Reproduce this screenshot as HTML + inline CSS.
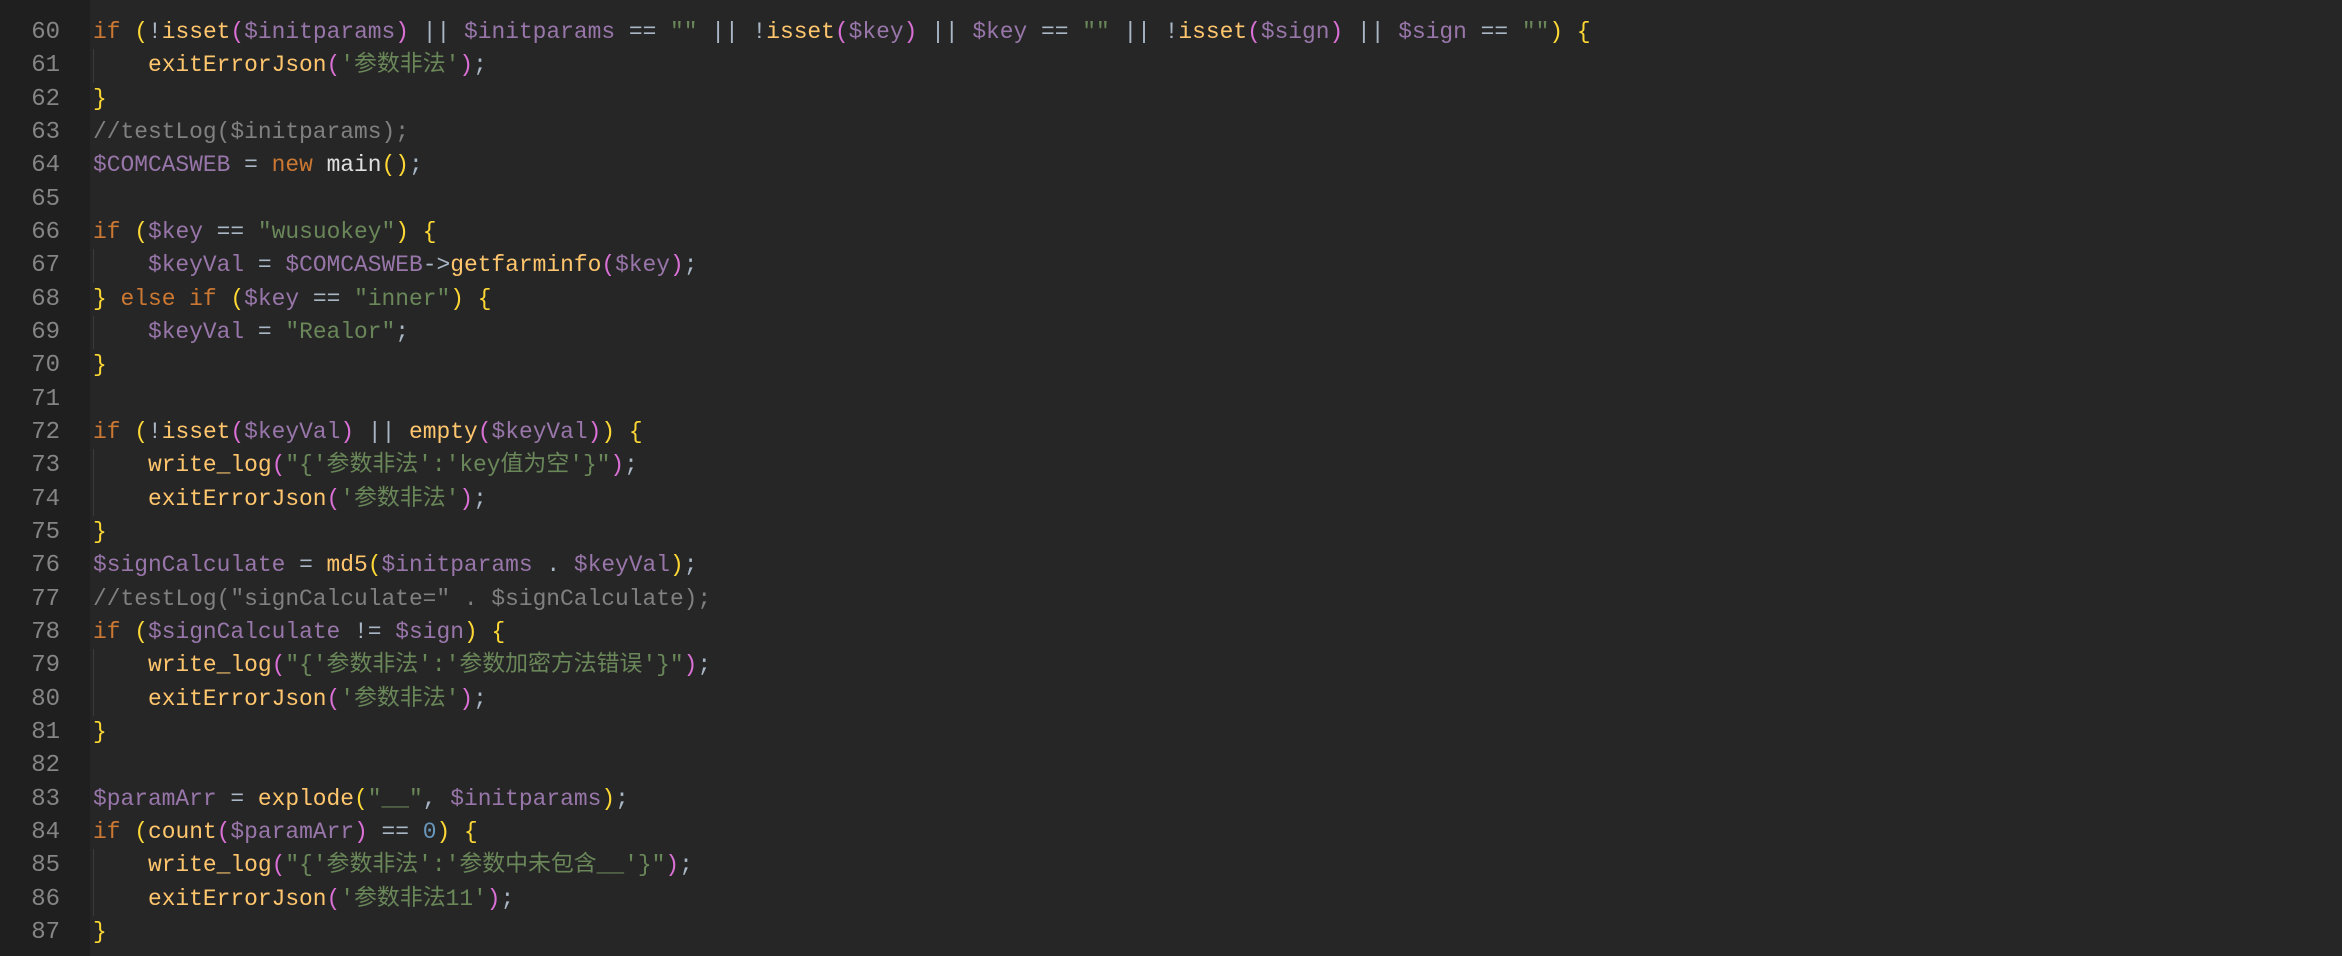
<!DOCTYPE html>
<html><head><meta charset="utf-8"><style>
html,body{margin:0;padding:0;width:2342px;height:956px;overflow:hidden;background:#262626;}
body{font-family:"Liberation Mono","Noto Sans CJK SC",monospace;font-size:22.9px;}
.g{position:absolute;left:0;top:0;width:90px;height:956px;background:#1f1f1f;}
.wrap{position:absolute;left:0;top:16px;}
.l{height:33.33px;line-height:33.33px;white-space:pre;position:relative;}
.n{position:absolute;left:0;width:60px;text-align:right;color:#858585;font-size:24px;}
.c{position:absolute;left:93px;color:#a9b7c6;}
.ig{position:absolute;left:93px;top:0;width:1px;height:33.33px;background:#3a3a3a;}
.k{color:#cc7832}.v{color:#9876aa}.f{color:#ffc66d}.s{color:#6a8759}.m{color:#808080}.y{color:#fdd835}.p{color:#da70d6}.w{color:#e0e0e0}.num{color:#6897bb}
</style></head><body>
<div class="g"></div>
<div class="wrap">
<div class="l"><span class="n">60</span><span class="c"><span class="k">if</span> <span class="y">(</span>!<span class="f">isset</span><span class="p">(</span><span class="v">$initparams</span><span class="p">)</span> || <span class="v">$initparams</span> == <span class="s">""</span> || !<span class="f">isset</span><span class="p">(</span><span class="v">$key</span><span class="p">)</span> || <span class="v">$key</span> == <span class="s">""</span> || !<span class="f">isset</span><span class="p">(</span><span class="v">$sign</span><span class="p">)</span> || <span class="v">$sign</span> == <span class="s">""</span><span class="y">)</span> <span class="y">{</span></span></div>
<div class="l"><span class="n">61</span><span class="ig"></span><span class="c">    <span class="f">exitErrorJson</span><span class="p">(</span><span class="s">'参数非法'</span><span class="p">)</span>;</span></div>
<div class="l"><span class="n">62</span><span class="c"><span class="y">}</span></span></div>
<div class="l"><span class="n">63</span><span class="c"><span class="m">//testLog($initparams);</span></span></div>
<div class="l"><span class="n">64</span><span class="c"><span class="v">$COMCASWEB</span> = <span class="k">new</span> <span class="w">main</span><span class="y">()</span>;</span></div>
<div class="l"><span class="n">65</span><span class="c"></span></div>
<div class="l"><span class="n">66</span><span class="c"><span class="k">if</span> <span class="y">(</span><span class="v">$key</span> == <span class="s">"wusuokey"</span><span class="y">)</span> <span class="y">{</span></span></div>
<div class="l"><span class="n">67</span><span class="ig"></span><span class="c">    <span class="v">$keyVal</span> = <span class="v">$COMCASWEB</span>-&gt;<span class="f">getfarminfo</span><span class="p">(</span><span class="v">$key</span><span class="p">)</span>;</span></div>
<div class="l"><span class="n">68</span><span class="c"><span class="y">}</span> <span class="k">else if</span> <span class="y">(</span><span class="v">$key</span> == <span class="s">"inner"</span><span class="y">)</span> <span class="y">{</span></span></div>
<div class="l"><span class="n">69</span><span class="ig"></span><span class="c">    <span class="v">$keyVal</span> = <span class="s">"Realor"</span>;</span></div>
<div class="l"><span class="n">70</span><span class="c"><span class="y">}</span></span></div>
<div class="l"><span class="n">71</span><span class="c"></span></div>
<div class="l"><span class="n">72</span><span class="c"><span class="k">if</span> <span class="y">(</span>!<span class="f">isset</span><span class="p">(</span><span class="v">$keyVal</span><span class="p">)</span> || <span class="f">empty</span><span class="p">(</span><span class="v">$keyVal</span><span class="p">)</span><span class="y">)</span> <span class="y">{</span></span></div>
<div class="l"><span class="n">73</span><span class="ig"></span><span class="c">    <span class="f">write_log</span><span class="p">(</span><span class="s">"{'参数非法':'key值为空'}"</span><span class="p">)</span>;</span></div>
<div class="l"><span class="n">74</span><span class="ig"></span><span class="c">    <span class="f">exitErrorJson</span><span class="p">(</span><span class="s">'参数非法'</span><span class="p">)</span>;</span></div>
<div class="l"><span class="n">75</span><span class="c"><span class="y">}</span></span></div>
<div class="l"><span class="n">76</span><span class="c"><span class="v">$signCalculate</span> = <span class="f">md5</span><span class="y">(</span><span class="v">$initparams</span> . <span class="v">$keyVal</span><span class="y">)</span>;</span></div>
<div class="l"><span class="n">77</span><span class="c"><span class="m">//testLog("signCalculate=" . $signCalculate);</span></span></div>
<div class="l"><span class="n">78</span><span class="c"><span class="k">if</span> <span class="y">(</span><span class="v">$signCalculate</span> != <span class="v">$sign</span><span class="y">)</span> <span class="y">{</span></span></div>
<div class="l"><span class="n">79</span><span class="ig"></span><span class="c">    <span class="f">write_log</span><span class="p">(</span><span class="s">"{'参数非法':'参数加密方法错误'}"</span><span class="p">)</span>;</span></div>
<div class="l"><span class="n">80</span><span class="ig"></span><span class="c">    <span class="f">exitErrorJson</span><span class="p">(</span><span class="s">'参数非法'</span><span class="p">)</span>;</span></div>
<div class="l"><span class="n">81</span><span class="c"><span class="y">}</span></span></div>
<div class="l"><span class="n">82</span><span class="c"></span></div>
<div class="l"><span class="n">83</span><span class="c"><span class="v">$paramArr</span> = <span class="f">explode</span><span class="y">(</span><span class="s">"__"</span>, <span class="v">$initparams</span><span class="y">)</span>;</span></div>
<div class="l"><span class="n">84</span><span class="c"><span class="k">if</span> <span class="y">(</span><span class="f">count</span><span class="p">(</span><span class="v">$paramArr</span><span class="p">)</span> == <span class="num">0</span><span class="y">)</span> <span class="y">{</span></span></div>
<div class="l"><span class="n">85</span><span class="ig"></span><span class="c">    <span class="f">write_log</span><span class="p">(</span><span class="s">"{'参数非法':'参数中未包含__'}"</span><span class="p">)</span>;</span></div>
<div class="l"><span class="n">86</span><span class="ig"></span><span class="c">    <span class="f">exitErrorJson</span><span class="p">(</span><span class="s">'参数非法11'</span><span class="p">)</span>;</span></div>
<div class="l"><span class="n">87</span><span class="c"><span class="y">}</span></span></div>
</div>
</body></html>
